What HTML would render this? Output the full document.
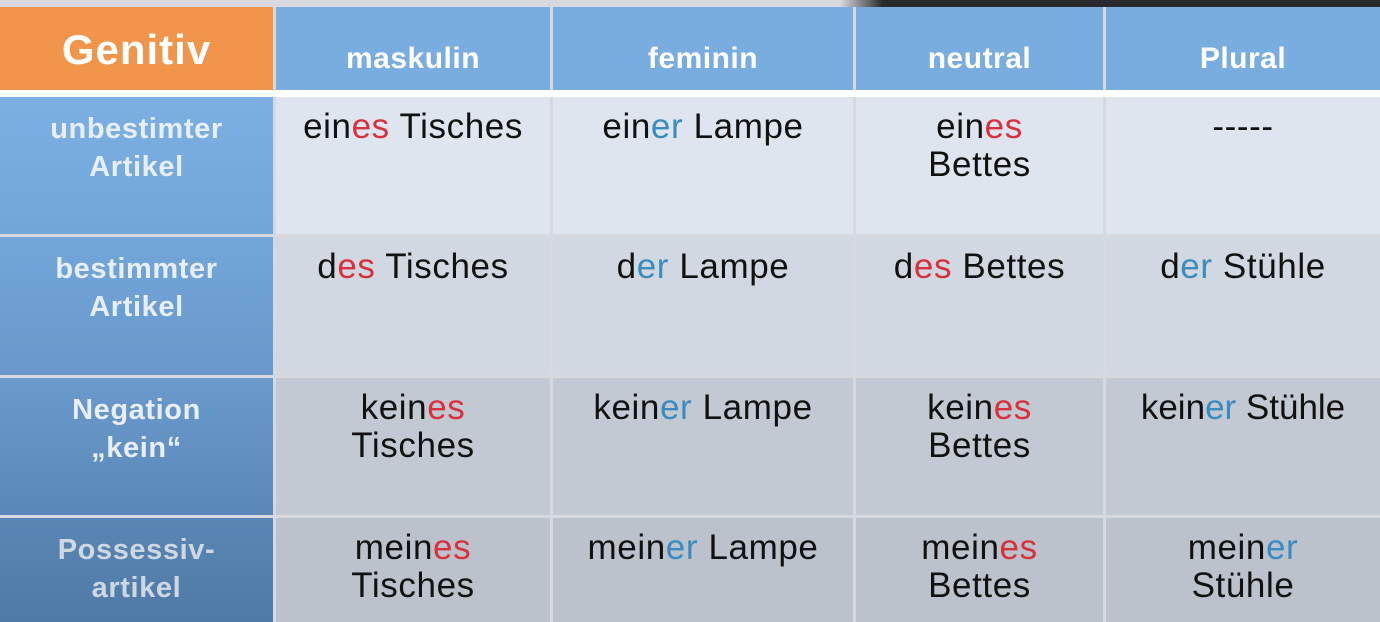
<!DOCTYPE html>
<html><head><style>
body{margin:0;width:1380px;height:622px;overflow:hidden;background:#d8d9de;font-family:"Liberation Sans",sans-serif;position:relative}
.c{position:absolute;box-sizing:border-box;text-align:center;white-space:nowrap}
.h{top:7px;height:83px;background:#79ade0;color:#fff;font-weight:bold;font-size:30px;line-height:104px;letter-spacing:0.5px}
.l{left:0;width:273px;color:#e8eef5;font-weight:bold;font-size:29px;line-height:38px;padding-top:13px;letter-spacing:0.6px}
.d{color:#111;font-size:35px;line-height:38px;padding-top:11px;letter-spacing:0.6px}
.r{color:#d8313d}.b{color:#3a8cc0}
</style></head><body>
<div style="position:absolute;left:840px;top:0;width:540px;height:7px;background:linear-gradient(90deg,#d8d9de,#2a2a2e 8%,#2a2a2e)"></div>
<div style="position:absolute;left:0;top:90px;width:1380px;height:7px;background:#fff"></div>
<div class="c h" style="left:0;width:273px;background:#f0954a;font-size:42px;line-height:86px;letter-spacing:1px">Genitiv</div>
<div class="c h" style="left:276px;width:274px">maskulin</div>
<div class="c h" style="left:553px;width:300px">feminin</div>
<div class="c h" style="left:856px;width:247px">neutral</div>
<div class="c h" style="left:1106px;width:274px">Plural</div>

<div class="c l" style="top:97px;height:137px;background:linear-gradient(#7cb0e2,#72a5d8)">unbestimter<br>Artikel</div>
<div class="c l" style="top:237px;height:138px;background:linear-gradient(#72a6d9,#6898cb)">bestimmter<br>Artikel</div>
<div class="c l" style="top:378px;height:137px;background:linear-gradient(#6a9bcd,#5a87b7)">Negation<br>„kein“</div>
<div class="c l" style="top:518px;height:104px;background:linear-gradient(#5a86b5,#4f7aa7);color:#cfd8e2">Possessiv-<br>artikel</div>

<div class="c d" style="left:276px;top:97px;width:274px;height:137px;background:#dfe5ef">ein<span class="r">es</span> Tisches</div>
<div class="c d" style="left:553px;top:97px;width:300px;height:137px;background:#dfe5ef">ein<span class="b">er</span> Lampe</div>
<div class="c d" style="left:856px;top:97px;width:247px;height:137px;background:#dfe5ef">ein<span class="r">es</span><br>Bettes</div>
<div class="c d" style="left:1106px;top:97px;width:274px;height:137px;background:#dfe5ef">-----</div>

<div class="c d" style="left:276px;top:237px;width:274px;height:138px;background:#d2d8e1">d<span class="r">es</span> Tisches</div>
<div class="c d" style="left:553px;top:237px;width:300px;height:138px;background:#d2d8e1">d<span class="b">er</span> Lampe</div>
<div class="c d" style="left:856px;top:237px;width:247px;height:138px;background:#d2d8e1">d<span class="r">es</span> Bettes</div>
<div class="c d" style="left:1106px;top:237px;width:274px;height:138px;background:#d2d8e1">d<span class="b">er</span> Stühle</div>

<div class="c d" style="left:276px;top:378px;width:274px;height:137px;background:#c3c9d2">kein<span class="r">es</span><br>Tisches</div>
<div class="c d" style="left:553px;top:378px;width:300px;height:137px;background:#c3c9d2">kein<span class="b">er</span> Lampe</div>
<div class="c d" style="left:856px;top:378px;width:247px;height:137px;background:#c3c9d2">kein<span class="r">es</span><br>Bettes</div>
<div class="c d" style="left:1106px;top:378px;width:274px;height:137px;background:#c3c9d2;letter-spacing:0">kein<span class="b">er</span> Stühle</div>

<div class="c d" style="left:276px;top:518px;width:274px;height:104px;background:#bcc2cb">mein<span class="r">es</span><br>Tisches</div>
<div class="c d" style="left:553px;top:518px;width:300px;height:104px;background:#bcc2cb">mein<span class="b">er</span> Lampe</div>
<div class="c d" style="left:856px;top:518px;width:247px;height:104px;background:#bcc2cb">mein<span class="r">es</span><br>Bettes</div>
<div class="c d" style="left:1106px;top:518px;width:274px;height:104px;background:#bcc2cb">mein<span class="b">er</span><br>Stühle</div>
</body></html>
